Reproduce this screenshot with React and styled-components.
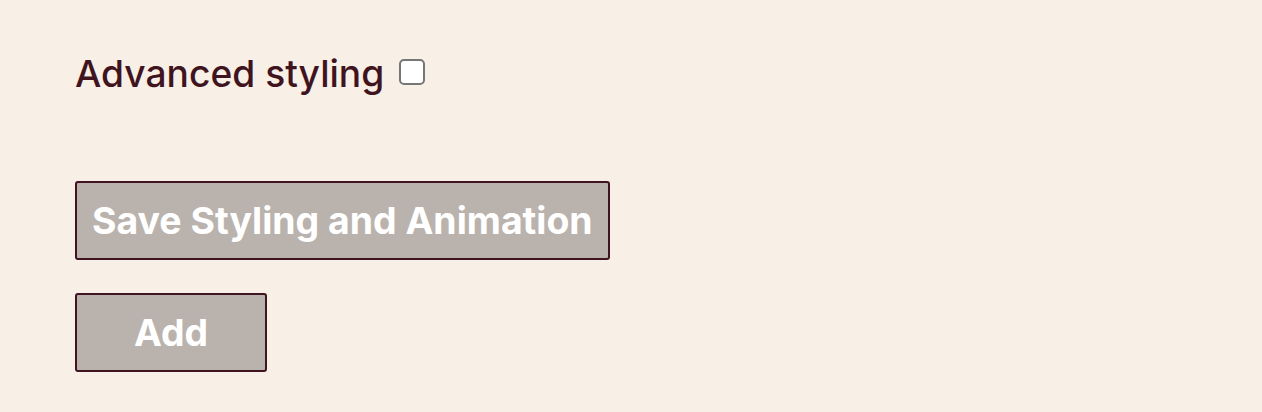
import React from "react";
import styled, { createGlobalStyle } from "styled-components";

const Global = createGlobalStyle`
  html, body { margin: 0; padding: 0; background: #f8f0e6; }
  body { font-family: Inter, "Noto Sans", sans-serif; }
`;

const Page = styled.div`
  display: flex;
  flex-direction: column;
  align-items: flex-start;
  padding: 52px 0 0 75px;
  min-height: 412px;
  box-sizing: border-box;
`;

const LabelRow = styled.label`
  display: flex;
  align-items: center;
  gap: 15px;
  font-size: 37.2px;
  font-weight: 500;
  color: #3f1420;
  line-height: 44px;
`;

const Check = styled.span`
  width: 22px;
  height: 22px;
  border: 2px solid #767676;
  border-radius: 5px;
  background: #fff;
  margin-top: -5px;
`;

const Buttons = styled.div`
  display: flex;
  flex-direction: column;
  align-items: flex-start;
  gap: 33px;
  margin-top: 85px;
`;

const Button = styled.button`
  font-family: Inter, "Noto Sans", sans-serif;
  font-size: 37.4px;
  font-weight: 700;
  color: #fff;
  background: #bab3ad;
  border: 2px solid #3f1420;
  border-radius: 3px;
  height: 79px;
  padding: 0 15px;
  min-width: ${(p) => p.$minWidth || 0}px;
  box-sizing: border-box;
  cursor: pointer;
`;

export default function App() {
  return (
    <>
      <Global />
      <Page>
        <LabelRow>
          Advanced styling
          <Check />
        </LabelRow>
        <Buttons>
          <Button>Save Styling and Animation</Button>
          <Button $minWidth={192}>Add</Button>
        </Buttons>
      </Page>
    </>
  );
}
